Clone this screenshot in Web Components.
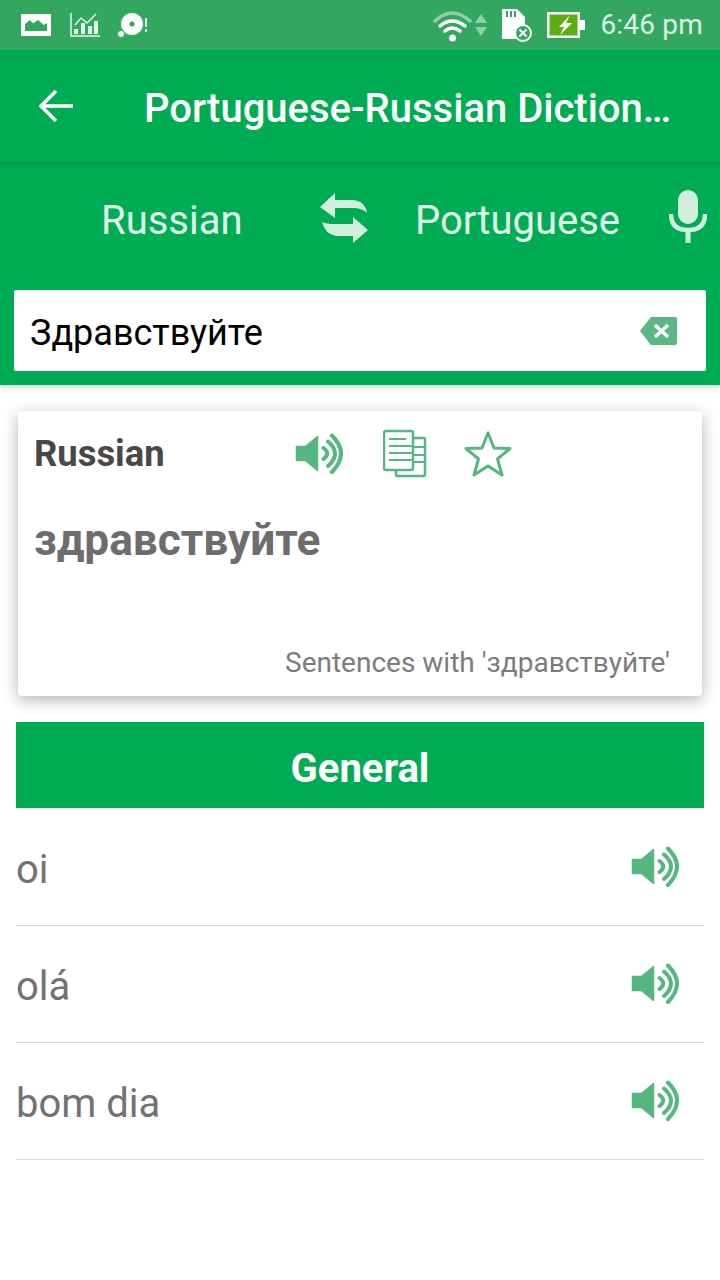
<!DOCTYPE html>
<html><head><meta charset="utf-8"><style>
html,body{margin:0;padding:0;background:#fff}
body{width:720px;height:1280px;overflow:hidden;font-family:Roboto,sans-serif}
</style></head><body>
<dict-app></dict-app>
<template id="spk"><svg width="50" height="50" viewBox="0 0 50 50" style="display:block"><path d="M1.500 17.500H10.500L22.500 7.500V41.500L10.500 31.500H1.500Z" fill="#55b77f" stroke="#55b77f" stroke-width="1.500" stroke-linejoin="round"/><g fill="none" stroke="#55b77f" stroke-width="4" stroke-linecap="round"><path d="M28.500 19Q36 24.500 28.500 30"/><path d="M33 12.500Q47 24.500 33 37"/><path d="M37 6.500Q55 24.500 37 43"/></g></svg></template>
<script>
const spk=document.getElementById('spk').innerHTML;
const def=(n,css,html)=>customElements.define(n,class extends HTMLElement{constructor(){super();this.attachShadow({mode:'open'}).innerHTML=`<style>${css}</style>${html}`}});
def('status-bar',`:host{display:flex;align-items:center;height:50px;background:#33a75f;color:#dff3e6;box-sizing:border-box;padding:0 17px 0 21px}
svg{display:block;flex:none}.t{font-size:28px;margin-left:14px;letter-spacing:.2px;white-space:nowrap;line-height:50px}.sp{flex:1}`,
`<svg width="30" height="24" viewBox="0 0 30 24"><path fill="#fff" fill-rule="evenodd" d="M0 1H30V23H0ZM4 18H26V10L23 12 17 7 12 10.500 9 7 4 11Z"/></svg>
<svg style="margin-left:19px" width="31" height="26" viewBox="0 0 31 26" fill="none" stroke="#e6f6ec"><path stroke-width="1.500" d="M1 1V24H30"/><path stroke-width="1.500" d="M5 13 11 6 17 11 26 2"/><path fill="#e6f6ec" stroke="none" d="M4 17H8V22H4ZM11 11H15V22H11ZM18 14H22V22H18ZM24 9H28V22H24Z"/></svg>
<svg style="margin-left:16px" width="32" height="26" viewBox="0 0 32 26"><circle cx="15" cy="12" r="11" fill="#fff"/><circle cx="15" cy="12" r="2.500" fill="#33a75f"/><circle cx="4" cy="22" r="3.500" fill="#fff" stroke="#33a75f" stroke-width="1"/><path stroke="#e6f6ec" stroke-width="2" d="M29 6V15M29 17V20"/></svg>
<span class="sp"></span>
<svg width="54" height="34" viewBox="0 0 54 34"><g fill="none" stroke-linecap="round"><path stroke="#8fd0a8" stroke-width="3.500" d="M2 13Q19-3 37 13"/><path stroke="#fff" stroke-width="3.500" d="M7 18Q19 8 32 18"/><path stroke="#fff" stroke-width="3.500" d="M12 23Q19 17 27 23"/></g><circle cx="19.500" cy="30" r="3.500" fill="#fff"/><path fill="#8fd0a8" d="M48 6 54 15H42ZM42 19H54L48 28Z"/></svg>
<svg style="margin-left:11px" width="34" height="34" viewBox="0 0 34 34"><path fill="#fff" d="M4 1H19L27 9V31H4Z"/><path stroke="#33a75f" stroke-width="2" d="M9 3V9M13 3V9M17 3V9"/><circle cx="25" cy="25" r="8" fill="#33a75f" stroke="#fff" stroke-width="2"/><path stroke="#fff" stroke-width="2" d="M21.500 21.500 28.500 28.500M28.500 21.500 21.500 28.500"/></svg>
<svg style="margin-left:14px" width="40" height="30" viewBox="0 0 40 30"><path fill="#fff" d="M1 2H34V28H1ZM34 10H39V20H34Z"/><path fill="#5aad13" d="M3.500 4.500H31.500V25.500H3.500Z"/><path fill="#fff" d="M24 5 13 17H18L14 25 26 13H20Z"/></svg>
<span class="t">6:46 pm</span>`);
def('app-bar',`:host{display:flex;align-items:center;height:112px;background:#00ac53;color:#fff;position:relative;z-index:2;box-shadow:0 3px 3px rgba(0,0,0,.14);box-sizing:border-box;padding-left:39px}
svg{display:block;flex:none}.t{font:500 40px Roboto,sans-serif;margin-left:70px;margin-top:5px;white-space:nowrap}`,
`<svg width="35" height="34" viewBox="0 0 35 34" fill="none" stroke="#fff" stroke-width="3.500"><path d="M2 17H34M17 2 2 17 17 32"/></svg><span class="t">Portuguese-Russian Diction…</span>`);
def('search-panel',`:host{display:block;height:223px;background:#00ac53;box-sizing:border-box;position:relative;z-index:1;box-shadow:0 2px 5px rgba(0,0,0,.2)}
.row{display:flex;align-items:center;height:116px;color:#e0f5e9;font-size:40px;margin-bottom:12px}
.a{margin-left:101px;width:219px}.b{margin-left:45px;width:254px}svg{display:block;flex:none}
.box{margin:0 14px;height:81px;background:#fff;border-radius:2px;display:flex;align-items:center;padding:0 29px 0 16px;color:#000;font-size:36px;justify-content:space-between}
.box span{margin-top:4px}`,
`<div class="row"><span class="a">Russian</span><svg style="margin-top:-4px" width="50" height="50" viewBox="0 0 50 50" fill="#d2eedd"><path d="M0 14 15 0V7H33Q45 8 47 20 42 15 33 15H15V25Z"/><path d="M48 37 33 24V31H15Q6 31 2 29 5 41 16 43H33V50Z"/></svg><span class="b">Portuguese</span><svg style="margin-top:-7px" width="38" height="53" viewBox="0 0 38 53"><rect x="9" y="0" width="20" height="34" rx="10" fill="#d2eedd"/><path d="M2 24Q2 40 19 40T36 24" fill="none" stroke="#d2eedd" stroke-width="4.500"/><path d="M19 39V53" stroke="#d2eedd" stroke-width="5"/></svg></div>
<div class="box"><span>Здравствуйте</span><svg width="37" height="28" viewBox="0 0 37 28"><path fill="#5bb885" d="M11 0H35Q37 0 37 2V26Q37 28 35 28H11L0 14Z"/><path stroke="#fff" stroke-width="3.500" d="M15 8 28 20M28 8 15 20"/></svg></div>`);
def('word-card',`:host{display:block;margin:26px 18px 0;height:285px;background:#fff;border-radius:4px;box-shadow:0 4px 16px rgba(0,0,0,.3);position:relative;box-sizing:border-box;padding:0 16px}
svg{display:block;flex:none}.h{display:flex;align-items:center;height:85px}.l{font:700 36.400px Roboto,sans-serif;color:#484848;width:261px;white-space:nowrap}
.w{font:700 44.200px Roboto,sans-serif;color:#6d6d6d;line-height:52px;margin-top:18px}.s{font-size:28px;color:#7c7c7c;position:absolute;right:32px;bottom:17px;white-space:nowrap}`,
`<div class="h"><span class="l">Russian</span>${spk}<svg style="margin-left:38px" width="44" height="50" viewBox="0 0 44 50" fill="none" stroke="#55b77f" stroke-width="2.500"><path fill="#fff" d="M13 9H41Q42 9 42 10V45Q42 47 40 47H14Q13 47 13 45Z"/><path fill="#fff" d="M3 2H28Q30 2 30 4V39Q30 41 28 41H3Q1 41 1 39V4Q1 2 3 2Z"/><path stroke-width="2" d="M6 10H23M6 17H29M6 24H29M6 31H29M30 18H41M30 26H41M30 33H41"/></svg><svg style="margin-left:36px" width="50" height="48" viewBox="0 0 50 48" fill="none" stroke="#55b77f" stroke-width="3" stroke-linejoin="round"><path d="M25 3 31 18 47 18.500 34.500 29 39 45 25 36 11 45 15.500 29 3 18.500 19 18Z"/></svg></div>
<div class="w">здравствуйте</div><div class="s">Sentences with 'здравствуйте'</div>`);
def('section-head',`:host{display:block;margin:26px 16px 1px;height:86px;background:#00ac53;color:#fff;text-align:center;font:700 40px/94px Roboto,sans-serif;position:relative}`,`<slot></slot>`);
def('word-row',`:host{display:flex;align-items:center;justify-content:space-between;height:117px;margin:0 16px;border-bottom:1px solid #d9d9d9;box-sizing:border-box;color:#727272;font-size:40px;padding-right:23px}
svg{display:block}span{margin-top:4px}.i{margin-top:-1px}`,`<span><slot></slot></span><div class="i">${spk}</div>`);
def('dict-app',`:host{display:block;width:720px;height:1280px;overflow:hidden}`,`<status-bar></status-bar><app-bar></app-bar><search-panel></search-panel><word-card></word-card><section-head>General</section-head><word-row>oi</word-row><word-row>olá</word-row><word-row>bom dia</word-row>`);
</script></body></html>
